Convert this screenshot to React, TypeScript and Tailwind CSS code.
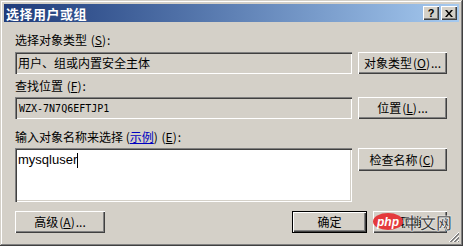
import React from 'react';

const cjk = { fontFamily: '"Noto Sans CJK SC", "Liberation Sans", sans-serif' };

const raised =
  'bg-[#d4d0c8] shadow-[inset_1px_1px_#ffffff,inset_-1px_-1px_#404040,inset_-2px_-2px_#808080]';
const sunken =
  'shadow-[inset_1px_1px_#808080,inset_2px_2px_#404040,inset_-1px_-1px_#ffffff,inset_-2px_-2px_#d4d0c8]';

const Btn: React.FC<{ w: string; children: React.ReactNode; isDefault?: boolean; h?: string }> = ({
  w,
  children,
  isDefault,
  h = 'h-[22px]',
}) => (
  <div className={`${w} ${h} ${isDefault ? 'border border-black' : ''} shrink-0`}>
    <div
      className={`${raised} w-full h-full flex items-center justify-center text-[12px] text-black leading-none`}
      style={cjk}
    >
      {children}
    </div>
  </div>
);

const Key: React.FC<{ k: string }> = ({ k }) => (
  <span className="mx-[1px]">
    (<span className="underline">{k}</span>)
  </span>
);

export default function App() {
  return (
    <div className="w-[463px] h-[246px] bg-[#d4d0c8] relative p-[4px] flex flex-col shadow-[inset_-1px_-1px_#404040,inset_1px_1px_#d4d0c8,inset_-2px_-2px_#808080,inset_2px_2px_#ffffff]">
      {/* title bar */}
      <div className="h-[18px] flex items-center bg-gradient-to-r from-[#1f3b7a] to-[#a6caf0] pl-[2px] pr-[2px]">
        <span className="text-white font-bold text-[13px] tracking-[0.5px] leading-none flex-1" style={cjk}>
          选择用户或组
        </span>
        <div className="flex gap-[2px]">
          <div className={`${raised} w-[16px] h-[14px] flex items-center justify-center text-[11px] font-bold leading-none text-black`} style={{ fontFamily: '"Liberation Sans", sans-serif' }}>
            ?
          </div>
          <div className={`${raised} w-[16px] h-[14px] flex items-center justify-center`}>
            <svg width="8" height="7" viewBox="0 0 8 7">
              <path d="M0 0 L2 0 L4 2.5 L6 0 L8 0 L5 3.5 L8 7 L6 7 L4 4.5 L2 7 L0 7 L3 3.5 Z" fill="#000" />
            </svg>
          </div>
        </div>
      </div>

      {/* body */}
      <div className="flex flex-col pl-[11px] pr-[12px]">
        <div className="mt-[11px] h-[14px] text-[12px] leading-[14px] text-black" style={cjk}>
          选择对象类型 <Key k="S" />:
        </div>
        <div className="mt-[5px] flex gap-[6px]">
          <div className={`w-[337px] h-[22px] ${sunken} flex items-center pl-[3px] text-[12px] text-black`} style={cjk}>
            用户、组或内置安全主体
          </div>
          <Btn w="w-[89px]">
            对象类型 <Key k="O" />...
          </Btn>
        </div>

        <div className="mt-[5px] h-[14px] text-[12px] leading-[14px] text-black" style={cjk}>
          查找位置 <Key k="F" />:
        </div>
        <div className="mt-[4px] flex gap-[6px]">
          <div
            className={`w-[337px] h-[22px] ${sunken} flex items-center pl-[4px] text-[10px] text-black`}
            style={{ fontFamily: '"DejaVu Sans Mono", "Liberation Mono", monospace' }}
          >
            WZX-7N7Q6EFTJP1
          </div>
          <Btn w="w-[89px]">
            位置 <Key k="L" />...
          </Btn>
        </div>

        <div className="mt-[11px] h-[14px] text-[12px] leading-[14px] text-black" style={cjk}>
          输入对象名称来选择 (<span className="text-[#0000c0] underline">示例</span>) <Key k="E" />:
        </div>
        <div className="mt-[4px] flex gap-[6px] items-start">
          <div className={`w-[337px] h-[54px] bg-white ${sunken} pl-[3px] pt-[4px]`}>
            <div className="flex items-center text-[13px] leading-[16px] text-black" style={{ fontFamily: '"Liberation Sans", sans-serif' }}>
              mysqluser
              <span className="inline-block w-[1px] h-[15px] bg-black" />
            </div>
          </div>
          <Btn w="w-[89px]" h="h-[23px]">
            检查名称 <Key k="C" />
          </Btn>
        </div>

        <div className="mt-[9px] flex items-center">
          <Btn w="w-[90px]">
            高级 <Key k="A" />...
          </Btn>
          <div className="flex-1" />
          <Btn w="w-[75px]" isDefault>
            确定
          </Btn>
          <div className="w-[6px]" />
          <Btn w="w-[74px]">取消</Btn>
        </div>
      </div>

      {/* resize grip */}
      <svg className="absolute right-[3px] bottom-[3px]" width="12" height="12" viewBox="0 0 12 12">
        <g strokeWidth="1">
          <line x1="11" y1="1" x2="1" y2="11" stroke="#ffffff" />
          <line x1="11" y1="2" x2="2" y2="11" stroke="#808080" />
          <line x1="11" y1="3" x2="3" y2="11" stroke="#808080" />
          <line x1="11" y1="5" x2="5" y2="11" stroke="#ffffff" />
          <line x1="11" y1="6" x2="6" y2="11" stroke="#808080" />
          <line x1="11" y1="7" x2="7" y2="11" stroke="#808080" />
          <line x1="11" y1="9" x2="9" y2="11" stroke="#ffffff" />
          <line x1="11" y1="10" x2="10" y2="11" stroke="#808080" />
        </g>
      </svg>

      {/* watermark */}
      <div className="absolute left-[373px] top-[213px] flex items-center">
        <div className="w-[30px] h-[17px] rounded-[50%] bg-[#e4393c] flex items-center justify-center">
          <span className="text-white text-[12px] italic font-bold leading-none" style={{ fontFamily: '"Liberation Sans", sans-serif' }}>
            php
          </span>
        </div>
        <span
          className="ml-[1px] text-[16px] font-bold leading-none text-[#3a3a3a] [-webkit-text-stroke:0.5px_#ffffff]"
          style={cjk}
        >
          中文网
        </span>
      </div>
    </div>
  );
}
